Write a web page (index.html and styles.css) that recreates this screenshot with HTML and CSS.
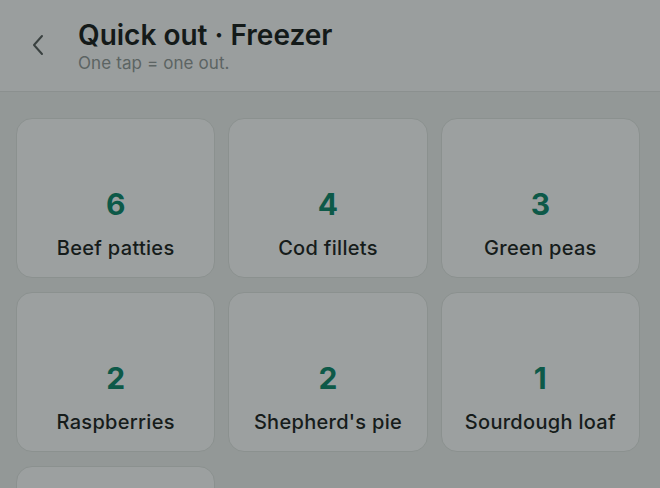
FILE: index.html
```html
<!DOCTYPE html>
<html lang="en">
<head>
<meta charset="utf-8">
<title>Quick out · Freezer</title>
<link rel="stylesheet" href="styles.css">
</head>
<body>
<header class="topbar">
  <button class="back" aria-label="Back">
    <svg width="14" height="22" viewBox="0 0 14 22" fill="none"><path d="M11 2 L3 11 L11 20" stroke="#3a4140" stroke-width="2" stroke-linecap="round" stroke-linejoin="round"/></svg>
  </button>
  <div class="titles">
    <h1 class="title">Quick out · Freezer</h1>
    <p class="subtitle">One tap = one out.</p>
  </div>
</header>
<main class="grid">
  <button class="card"><span class="count">6</span><span class="name">Beef patties</span></button>
  <button class="card"><span class="count">4</span><span class="name">Cod fillets</span></button>
  <button class="card"><span class="count">3</span><span class="name">Green peas</span></button>
  <button class="card"><span class="count">2</span><span class="name">Raspberries</span></button>
  <button class="card"><span class="count">2</span><span class="name">Shepherd's pie</span></button>
  <button class="card"><span class="count">1</span><span class="name">Sourdough loaf</span></button>
  <button class="card" aria-label="More"></button>
</main>
</body>
</html>
```

FILE: styles.css
```css
* { box-sizing: border-box; }
html, body { margin: 0; padding: 0; }
body {
  background: #939897;
  font-family: Inter, "Noto Sans", sans-serif;
  color: #161c1b;
  height: 488px;
  overflow: hidden;
}
.topbar {
  display: flex;
  align-items: flex-start;
  height: 92px;
  background: #9a9e9e;
  border-bottom: 1px solid #8b908f;
  padding: 18px 0 0 26px;
}
.back {
  border: 0;
  background: none;
  padding: 0;
  margin: 15px 0 0 0;
  width: 52px;
  height: 24px;
  display: flex;
  align-items: center;
  justify-content: flex-start;
  padding-left: 5px;
}
.titles { display: flex; flex-direction: column; }
.title {
  margin: 0;
  font-size: 28px;
  font-weight: 600;
  line-height: 34px;
  letter-spacing: 0;
  color: #141a19;
}
.subtitle {
  margin: 0;
  font-size: 17px;
  line-height: 22px;
  letter-spacing: 0.1px;
  color: #5c6463;
}
.grid {
  display: grid;
  grid-template-columns: repeat(3, 1fr);
  grid-auto-rows: 160px;
  column-gap: 13px;
  row-gap: 14px;
  padding: 26px 20px 0 16px;
}
.card {
  display: flex;
  flex-direction: column;
  align-items: center;
  justify-content: flex-end;
  background: #9ca0a0;
  border: 1px solid #8b918f;
  border-radius: 16px;
  padding: 0 8px 17px;
  font-family: inherit;
}
.count {
  font-size: 30px;
  font-weight: 700;
  line-height: 36px;
  color: #0d5948;
}
.name {
  margin-top: 14px;
  font-size: 20px;
  font-weight: 500;
  line-height: 24px;
  letter-spacing: 0.3px;
  color: #161c1b;
}
```
